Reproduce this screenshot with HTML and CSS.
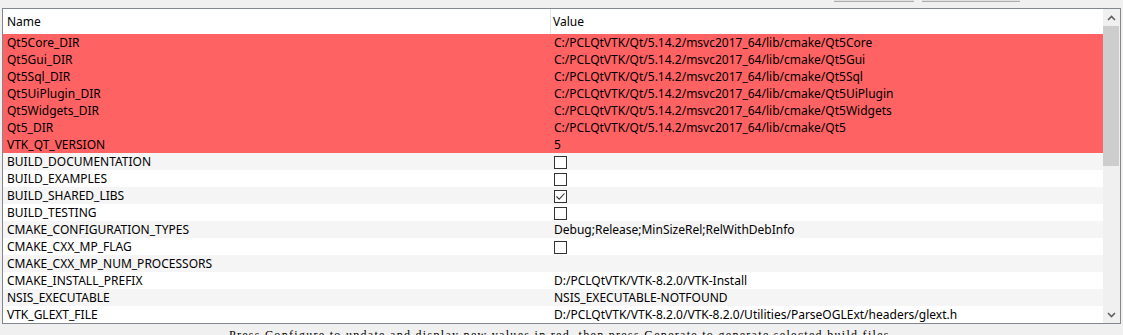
FILE: index.html
```html
<!DOCTYPE html>
<html>
<head>
<meta charset="utf-8">
<link rel="stylesheet" href="styles.css">
</head>
<body>
<div class="topbar">
  <div class="btn btn-a"></div>
  <div class="btn btn-b"></div>
</div>
<div class="table">
  <div class="main">
    <div class="header">
      <div class="hcell name">Name</div>
      <div class="hcell value">Value</div>
    </div>
    <div class="row red"><div class="c1">Qt5Core_DIR</div><div class="c2">C:/PCLQtVTK/Qt/5.14.2/msvc2017_64/lib/cmake/Qt5Core</div></div>
    <div class="row red"><div class="c1">Qt5Gui_DIR</div><div class="c2">C:/PCLQtVTK/Qt/5.14.2/msvc2017_64/lib/cmake/Qt5Gui</div></div>
    <div class="row red"><div class="c1">Qt5Sql_DIR</div><div class="c2">C:/PCLQtVTK/Qt/5.14.2/msvc2017_64/lib/cmake/Qt5Sql</div></div>
    <div class="row red"><div class="c1">Qt5UiPlugin_DIR</div><div class="c2">C:/PCLQtVTK/Qt/5.14.2/msvc2017_64/lib/cmake/Qt5UiPlugin</div></div>
    <div class="row red"><div class="c1">Qt5Widgets_DIR</div><div class="c2">C:/PCLQtVTK/Qt/5.14.2/msvc2017_64/lib/cmake/Qt5Widgets</div></div>
    <div class="row red"><div class="c1">Qt5_DIR</div><div class="c2">C:/PCLQtVTK/Qt/5.14.2/msvc2017_64/lib/cmake/Qt5</div></div>
    <div class="row red"><div class="c1">VTK_QT_VERSION</div><div class="c2">5</div></div>
    <div class="row alt"><div class="c1">BUILD_DOCUMENTATION</div><div class="c2"><span class="check"></span></div></div>
    <div class="row"><div class="c1">BUILD_EXAMPLES</div><div class="c2"><span class="check"></span></div></div>
    <div class="row alt"><div class="c1">BUILD_SHARED_LIBS</div><div class="c2"><span class="check checked"><svg width="11" height="11" viewBox="0 0 11 11"><path d="M1.5 5.5 L4.2 8.2 L9.5 2.5" fill="none" stroke="#333" stroke-width="1.1"/></svg></span></div></div>
    <div class="row"><div class="c1">BUILD_TESTING</div><div class="c2"><span class="check"></span></div></div>
    <div class="row alt"><div class="c1">CMAKE_CONFIGURATION_TYPES</div><div class="c2">Debug;Release;MinSizeRel;RelWithDebInfo</div></div>
    <div class="row"><div class="c1">CMAKE_CXX_MP_FLAG</div><div class="c2"><span class="check"></span></div></div>
    <div class="row alt"><div class="c1">CMAKE_CXX_MP_NUM_PROCESSORS</div><div class="c2"></div></div>
    <div class="row"><div class="c1">CMAKE_INSTALL_PREFIX</div><div class="c2">D:/PCLQtVTK/VTK-8.2.0/VTK-Install</div></div>
    <div class="row alt"><div class="c1">NSIS_EXECUTABLE</div><div class="c2">NSIS_EXECUTABLE-NOTFOUND</div></div>
    <div class="row"><div class="c1">VTK_GLEXT_FILE</div><div class="c2">D:/PCLQtVTK/VTK-8.2.0/VTK-8.2.0/Utilities/ParseOGLExt/headers/glext.h</div></div>
  </div>
  <div class="scrollbar">
    <div class="arrow"><svg width="9" height="6" viewBox="0 0 9 6"><path d="M1 5 L4.5 1.5 L8 5" fill="none" stroke="#606060" stroke-width="1.6"/></svg></div>
    <div class="thumb"></div>
    <div class="track"></div>
    <div class="arrow"><svg width="9" height="6" viewBox="0 0 9 6"><path d="M1 1 L4.5 4.5 L8 1" fill="none" stroke="#606060" stroke-width="1.6"/></svg></div>
  </div>
</div>
<div class="hint">Press Configure to update and display new values in red, then press Generate to generate selected build files.</div>
</body>
</html>
```

FILE: styles.css
```css
html, body {
  margin: 0;
  padding: 0;
  background: #f0f0f0;
  overflow: hidden;
  width: 1123px;
  height: 335px;
}
body {
  font-family: "Noto Sans", "Open Sans", sans-serif;
  font-size: 12px;
  color: #000;
}
.topbar {
  height: 8px;
  display: flex;
  justify-content: flex-end;
  gap: 8px;
  padding-right: 103px;
}
.btn {
  height: 1px;
  background: #e1e1e1;
  border-bottom: 1px solid #adadad;
}
.btn-a { width: 80px; }
.btn-b { width: 98px; }
.table {
  margin: 0 2px;
  border: 1px solid #828790;
  height: 314px;
  display: flex;
  background: #fff;
}
.main {
  flex: 1;
  display: flex;
  flex-direction: column;
  overflow: hidden;
}
.header {
  height: 25px;
  display: grid;
  grid-template-columns: 548px 1fr;
  background: #fff;
}
.hcell {
  display: flex;
  align-items: center;
  padding-left: 4px;
  padding-bottom: 1px;
}
.hcell.name {
  border-right: 1px solid #e5e5e5;
}
.hcell.value {
  padding-left: 2px;
}
.row {
  height: 17px;
  display: grid;
  grid-template-columns: 548px 1fr;
  background: #fff;
  line-height: 17px;
  white-space: nowrap;
}
.row.alt { background: #f5f5f5; }
.row.red { background: #ff6262; }
.c1 {
  padding-left: 4px;
}
.c2 {
  padding-left: 3px;
  display: flex;
  align-items: center;
}
.check {
  width: 11px;
  height: 11px;
  border: 1px solid #333;
  background: #fff;
  display: flex;
  align-items: center;
  justify-content: center;
  margin-top: 1px;
}
.check svg { display: block; }
.scrollbar {
  width: 17px;
  background: #f0f0f0;
  display: flex;
  flex-direction: column;
}
.arrow {
  height: 17px;
  display: flex;
  align-items: center;
  justify-content: center;
}
.thumb {
  height: 140px;
  margin: 0 1px 0 0;
  background: #cdcdcd;
}
.track { flex: 1; }
.hint {
  font-family: "Liberation Serif", "DejaVu Serif", serif;
  font-size: 12px;
  letter-spacing: 1.3px;
  text-align: center;
  margin-top: 4px;
  line-height: 14px;
  white-space: nowrap;
}
```
